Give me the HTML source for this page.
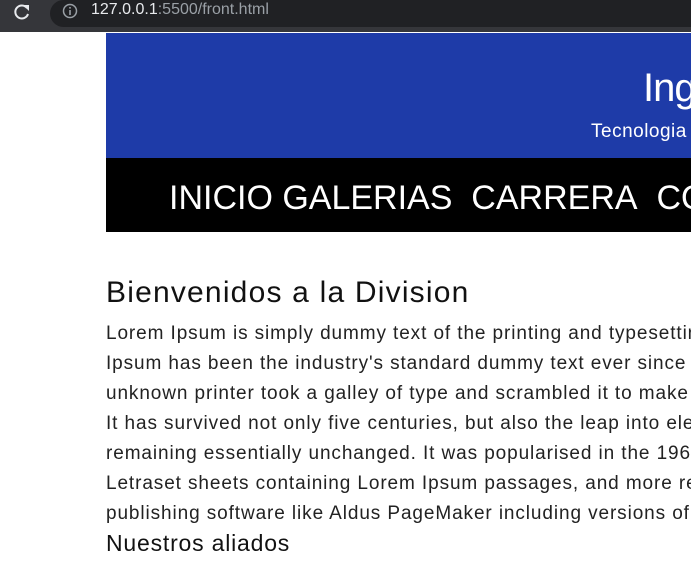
<!DOCTYPE html>
<html><head><meta charset="utf-8"><style>
html,body{margin:0;width:691px;height:584px;overflow:hidden;background:#fff}
#w{position:relative;width:691px;height:584px;overflow:hidden;font-family:"Liberation Sans",sans-serif}
.bar{position:absolute;left:0;top:0;width:691px;height:32px;background:#35363a}
.url{position:absolute;left:50px;top:0;width:641px;height:27px;background:#202124;border-radius:14px 0 0 14px}
.t{position:absolute;white-space:nowrap}
</style></head><body><div id="w">
<div class="bar"><div class="url"></div>
<svg class="t" style="left:12px;top:2px" width="20" height="20" viewBox="0 0 20 20"><path d="M15 6A6.5 6.5 0 1 0 16 12" fill="none" stroke="#e8eaed" stroke-width="2"/><path d="M11 3h6v6z" fill="#e8eaed"/></svg>
<svg class="t" style="left:62px;top:3px" width="16" height="16" viewBox="0 0 16 16"><circle cx="8" cy="8" r="6.5" fill="none" stroke="#9aa0a6" stroke-width="1.5"/><rect x="7.2" y="7" width="1.6" height="5" fill="#9aa0a6"/><rect x="7.2" y="4" width="1.6" height="1.6" fill="#9aa0a6"/></svg>
<div class="t" style="left:91px;top:1px;font-size:16px;color:#e8eaed">127.0.0.1<span style="color:#9aa0a6">:5500/front.html</span></div>
</div>
<div class="t" style="left:106px;top:33px;width:585px;height:125px;background:#1e3ba8"></div>
<div class="t" style="left:643px;top:66px;font-size:40px;color:#fff;letter-spacing:-1px">Ing</div>
<div class="t" style="left:591px;top:121px;font-size:19px;color:#fff;letter-spacing:0.5px">Tecnologia</div>
<div class="t" style="left:106px;top:158px;width:585px;height:74px;background:#000"></div>
<div class="t" style="left:169px;top:179px;font-size:34px;color:#fff;letter-spacing:0">INICIO GALERIAS&nbsp; CARRERA&nbsp; CONTACTO</div>
<div class="t" style="left:106px;top:276px;font-size:30px;color:#111;letter-spacing:1.2px">Bienvenidos a la Division</div>
<div class="t" style="left:106px;top:319px;font-size:19px;line-height:30px;color:#222;letter-spacing:0.9px">
Lorem Ipsum is simply dummy text of the printing and typesetting industry. Lorem<br>
Ipsum has been the industry's standard dummy text ever since the 1500s, when an<br>
unknown printer took a galley of type and scrambled it to make a type specimen book.<br>
It has survived not only five centuries, but also the leap into electronic typesetting,<br>
remaining essentially unchanged. It was popularised in the 1960s with the release of<br>
Letraset sheets containing Lorem Ipsum passages, and more recently with desktop<br>
publishing software like Aldus PageMaker including versions of Lorem Ipsum.</div>
<div class="t" style="left:106px;top:530px;font-size:23px;color:#111;letter-spacing:0.8px">Nuestros aliados</div>
</div></body></html>
